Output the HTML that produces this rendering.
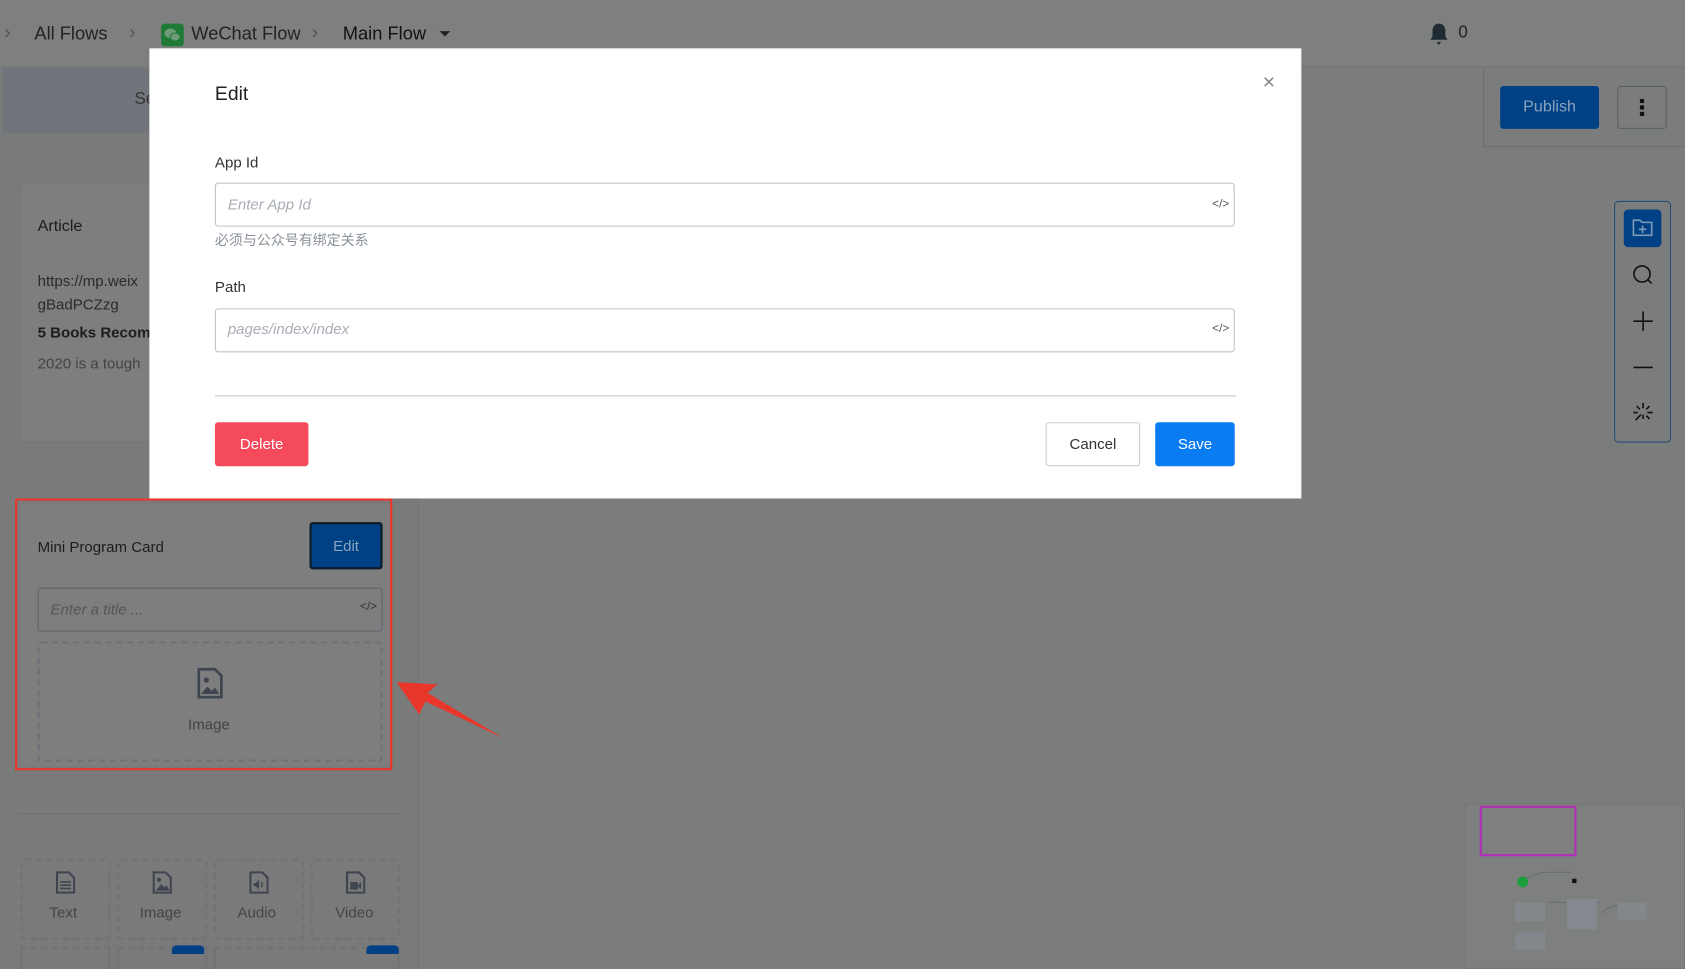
<!DOCTYPE html>
<html><head><meta charset="utf-8"><style>
*{box-sizing:border-box;margin:0;padding:0}
html,body{width:1685px;height:969px;overflow:hidden;background:#7b7c7c}
#w{position:absolute;left:0;top:0;width:1568px;height:902px;transform:scale(1.07462,1.07428);transform-origin:0 0;font-family:"Liberation Sans","Noto Sans CJK SC",sans-serif;color:#222}
.a{position:absolute}
.t{font-size:15px}
</style></head><body><div id="w">
<!-- header -->
<div class="a" style="left:0;top:0;width:1568px;height:63px;background:#7e7f7f;border-bottom:1px solid #727373"></div>
<div class="a" style="left:4px;top:20px;color:#555;font-size:18px">›</div>
<div class="a" style="left:32px;top:22px;font-size:17px;color:#222">All Flows</div>
<div class="a" style="left:120px;top:20px;color:#555;font-size:18px">›</div>
<div class="a" style="left:150px;top:22px;width:21px;height:21px;background:#1f7a36;border-radius:3px"></div>
<svg class="a" style="left:152px;top:25px" width="17" height="15" viewBox="0 0 17 15"><ellipse cx="6.5" cy="6" rx="5.5" ry="4.5" fill="#6f9a77"/><ellipse cx="11" cy="9.5" rx="4.5" ry="3.8" fill="#6f9a77" stroke="#1f7a36" stroke-width="1"/></svg>
<div class="a" style="left:178px;top:22px;font-size:17px;color:#222">WeChat Flow</div>
<div class="a" style="left:290px;top:20px;color:#555;font-size:18px">›</div>
<div class="a" style="left:319px;top:22px;font-size:17px;color:#111">Main Flow</div>
<div class="a" style="left:409px;top:29px;border:5px solid transparent;border-top:5px solid #222"></div>
<svg class="a" style="left:1330px;top:21px" width="18" height="22" viewBox="0 0 18 22"><path d="M9 1c-4 0-6 3-6 7v5l-2 3h16l-2-3V8c0-4-2-7-6-7zM7 18h4l-2 3z" fill="#1f2a33"/></svg>
<div class="a" style="left:1357px;top:22px;font-size:16px;color:#222">0</div>
<!-- left panel -->
<div class="a" style="left:2px;top:64px;width:388px;height:838px;background:#7a7a7a;border-right:1px solid #747474"></div>
<div class="a" style="left:2px;top:64px;width:388px;height:60px;background:#71757b"></div>
<div class="a" style="left:125px;top:84px;font-size:16px;color:#333">Se</div>
<div class="a" style="left:19px;top:170px;width:350px;height:242px;background:#7e7e7e;border:1px solid #767676;border-radius:4px"></div>
<div class="a t" style="left:35px;top:202px;color:#1d1d1d">Article</div>
<div class="a" style="left:35px;top:250px;font-size:14px;color:#2a2a2a;line-height:22px">https://mp.weix<br>gBadPCZzg</div>
<div class="a" style="left:35px;top:301px;font-size:14px;color:#1d1d1d;font-weight:bold">5 Books Recom</div>
<div class="a" style="left:35px;top:330px;font-size:14px;color:#444">2020 is a tough</div>
<!-- mini program card -->
<div class="a" style="left:19px;top:470px;width:345px;height:243px;background:#7e7e7e"></div>
<div class="a" style="left:14px;top:464px;width:351px;height:253px;border:2px solid #e8362b"></div>
<div class="a" style="left:35px;top:501px;font-size:14px;color:#1d1d1d">Mini Program Card</div>
<div class="a" style="left:288px;top:486px;width:68px;height:44px;background:#004185;border:2px solid #0e1a28;border-radius:3px;color:#8aa3bf;font-size:14px;text-align:center;line-height:40px">Edit</div>
<div class="a" style="left:35px;top:547px;width:321px;height:41px;border:1px solid #5d6470;border-radius:3px"></div>
<div class="a" style="left:47px;top:559px;font-size:14px;font-style:italic;color:#555">Enter a title ...</div>
<div class="a" style="left:335px;top:559px;font-size:11px;color:#333">&lt;/&gt;</div>
<div class="a" style="left:35px;top:597px;width:321px;height:112px;border:2px dashed #6c7078;border-radius:3px"></div>
<svg class="a" style="left:183px;top:621px" width="25" height="30" viewBox="0 0 25 30"><path d="M2 2h15l6 6v20H2z" fill="none" stroke="#3f4550" stroke-width="2.5"/><circle cx="9" cy="12" r="2.5" fill="#3f4550"/><path d="M4 25l6-7 4 4 3-3 4 6z" fill="#3f4550"/></svg>
<div class="a" style="left:175px;top:666px;font-size:14px;color:#444">Image</div>
<div class="a" style="left:16px;top:757px;width:360px;height:1px;background:#717171"></div>
<!-- element tiles -->
<div class="a" style="left:19px;top:799px;width:84px;height:76px;border:2px dashed #6f7377;border-radius:4px"></div>
<div class="a" style="left:109px;top:799px;width:84px;height:76px;border:2px dashed #6f7377;border-radius:4px"></div>
<div class="a" style="left:199px;top:799px;width:84px;height:76px;border:2px dashed #6f7377;border-radius:4px"></div>
<div class="a" style="left:289px;top:799px;width:83px;height:76px;border:2px dashed #6f7377;border-radius:4px"></div>
<svg class="a" style="left:52px;top:811px" width="18" height="21" viewBox="0 0 18 21"><path d="M1 1h11l5 5v14H1z" fill="none" stroke="#3f4550" stroke-width="2"/><path d="M4 10h10M4 13h10M4 16h10" stroke="#3f4550" stroke-width="1.5"/></svg>
<svg class="a" style="left:142px;top:811px" width="18" height="21" viewBox="0 0 18 21"><path d="M1 1h11l5 5v14H1z" fill="none" stroke="#3f4550" stroke-width="2"/><circle cx="6" cy="8" r="2" fill="#3f4550"/><path d="M3 18l5-6 3 3 2-2 3 5z" fill="#3f4550"/></svg>
<svg class="a" style="left:232px;top:811px" width="18" height="21" viewBox="0 0 18 21"><path d="M1 1h11l5 5v14H1z" fill="none" stroke="#3f4550" stroke-width="2"/><path d="M4 11h2l3-3v9l-3-3H4z" fill="#3f4550"/><path d="M11 10q2 2.5 0 5" stroke="#3f4550" fill="none" stroke-width="1.3"/></svg>
<svg class="a" style="left:322px;top:811px" width="18" height="21" viewBox="0 0 18 21"><path d="M1 1h11l5 5v14H1z" fill="none" stroke="#3f4550" stroke-width="2"/><path d="M4 10h7v7H4zM11 13l3-3v7l-3-3z" fill="#3f4550"/></svg>
<div class="a" style="left:46px;top:841px;font-size:14px;color:#444">Text</div>
<div class="a" style="left:130px;top:841px;font-size:14px;color:#444">Image</div>
<div class="a" style="left:221px;top:841px;font-size:14px;color:#444">Audio</div>
<div class="a" style="left:312px;top:841px;font-size:14px;color:#444">Video</div>
<div class="a" style="left:19px;top:881px;width:84px;height:21px;border:2px dashed #6f7377;border-bottom:none"></div>
<div class="a" style="left:109px;top:881px;width:84px;height:21px;border:2px dashed #6f7377;border-bottom:none"></div>
<div class="a" style="left:199px;top:881px;width:173px;height:21px;border:2px dashed #6f7377;border-bottom:none"></div>
<div class="a" style="left:160px;top:880px;width:30px;height:8px;background:#004185;border-radius:4px 4px 0 0"></div>
<div class="a" style="left:341px;top:880px;width:30px;height:8px;background:#004185;border-radius:4px 4px 0 0"></div>
<!-- red arrow -->
<svg class="a" style="left:365px;top:625px" width="110" height="65" viewBox="0 0 110 65"><path d="M4 10l38 2-9 8 70 42-72-34-6 12z" fill="#e8362b"/></svg>
<!-- right top -->
<div class="a" style="left:1380px;top:64px;width:188px;height:73px;border-left:1px solid #6d6e6e;border-bottom:1px solid #6d6e6e"></div>
<div class="a" style="left:1396px;top:80px;width:92px;height:40px;background:#004185;border-radius:3px;color:#8aa3bf;font-size:15px;text-align:center;line-height:40px">Publish</div>
<div class="a" style="left:1505px;top:80px;width:46px;height:40px;border:1px solid #5a5d60;border-radius:3px"></div>
<div class="a" style="left:1526px;top:92px;width:4px;height:4px;background:#111;border-radius:1px;box-shadow:0 6px 0 #111,0 12px 0 #111"></div>
<!-- toolbar -->
<div class="a" style="left:1502px;top:187px;width:53px;height:225px;border:1px solid #244e76;border-radius:4px"></div>
<div class="a" style="left:1511px;top:195px;width:35px;height:35px;background:#004185;border-radius:4px"></div>
<svg class="a" style="left:1519px;top:204px" width="19" height="16" viewBox="0 0 19 16"><path d="M1 1h6l2 2h9v12H1z" fill="none" stroke="#7f9bb8" stroke-width="1.5"/><path d="M9.5 6v7M6 9.5h7" stroke="#7f9bb8" stroke-width="1.5"/></svg>
<svg class="a" style="left:1519px;top:246px" width="20" height="20" viewBox="0 0 20 20"><circle cx="9" cy="9" r="7.5" fill="none" stroke="#111" stroke-width="1.5"/><path d="M14 14l4 4" stroke="#111" stroke-width="1.5"/></svg>
<svg class="a" style="left:1519px;top:289px" width="20" height="20" viewBox="0 0 20 20"><path d="M10 1v18M1 10h18" stroke="#111" stroke-width="1.5"/></svg>
<svg class="a" style="left:1519px;top:332px" width="20" height="20" viewBox="0 0 20 20"><path d="M1 10h18" stroke="#111" stroke-width="1.5"/></svg>
<svg class="a" style="left:1519px;top:374px" width="20" height="20" viewBox="0 0 20 20"><path d="M10 1v5M10 12v4M14 10h5M1 10h4M3 17l5-5M13 7l3-3M4 4l3 3M13 13l3 3" stroke="#111" stroke-width="1.5"/></svg>
<!-- minimap -->
<div class="a" style="left:1363px;top:748px;width:205px;height:154px;background:#7e7f7f;border:1px solid #757676"></div>
<div class="a" style="left:1377px;top:750px;width:90px;height:47px;border:2px solid #b02fb5"></div>
<svg class="a" style="left:1410px;top:805px" width="100" height="80" viewBox="0 0 100 80"><path d="M7 15q10-8 25-8h20M30 35q30 0 48 0M80 45q10-8 20-8" stroke="#6a6e72" fill="none" stroke-width="1"/></svg>
<div class="a" style="left:1412px;top:816px;width:10px;height:10px;background:#1aa03a;border-radius:50%"></div>
<div class="a" style="left:1463px;top:818px;width:4px;height:4px;background:#111"></div>
<div class="a" style="left:1458px;top:837px;width:28px;height:28px;background:#858a92"></div>
<div class="a" style="left:1410px;top:840px;width:28px;height:18px;background:#84878b"></div>
<div class="a" style="left:1505px;top:840px;width:27px;height:16px;background:#84878b"></div>
<div class="a" style="left:1410px;top:868px;width:28px;height:16px;background:#84878b"></div>
<!-- modal -->
<div class="a" style="left:139px;top:45px;width:1072px;height:419px;background:#fff"></div>
<div class="a" style="left:200px;top:77px;font-size:18px;color:#222">Edit</div>
<div class="a" style="left:1175px;top:66px;font-size:20px;color:#888">×</div>
<div class="a" style="left:200px;top:143px;font-size:14px;color:#333">App Id</div>
<div class="a" style="left:200px;top:170px;width:949px;height:41px;border:1px solid #bfc4cc;border-radius:3px"></div>
<div class="a" style="left:212px;top:182px;font-size:14px;font-style:italic;color:#a8adb5">Enter App Id</div>
<div class="a" style="left:1128px;top:184px;font-size:11px;color:#555">&lt;/&gt;</div>
<div class="a" style="left:200px;top:213px;font-size:13px;color:#8a919b">必须与公众号有绑定关系</div>
<div class="a" style="left:200px;top:259px;font-size:14px;color:#333">Path</div>
<div class="a" style="left:200px;top:287px;width:949px;height:41px;border:1px solid #bfc4cc;border-radius:3px"></div>
<div class="a" style="left:212px;top:298px;font-size:14px;font-style:italic;color:#a8adb5">pages/index/index</div>
<div class="a" style="left:1128px;top:300px;font-size:11px;color:#555">&lt;/&gt;</div>
<div class="a" style="left:200px;top:368px;width:950px;height:1px;background:#c3c7cd"></div>
<div class="a" style="left:200px;top:393px;width:87px;height:41px;background:#f54a5b;border-radius:3px;color:#fff;font-size:14px;text-align:center;line-height:41px">Delete</div>
<div class="a" style="left:973px;top:393px;width:88px;height:41px;border:1px solid #c8ccd2;border-radius:3px;color:#333;font-size:14px;text-align:center;line-height:39px">Cancel</div>
<div class="a" style="left:1075px;top:393px;width:74px;height:41px;background:#0a7cf2;border-radius:3px;color:#fff;font-size:14px;text-align:center;line-height:41px">Save</div>
</div></body></html>
